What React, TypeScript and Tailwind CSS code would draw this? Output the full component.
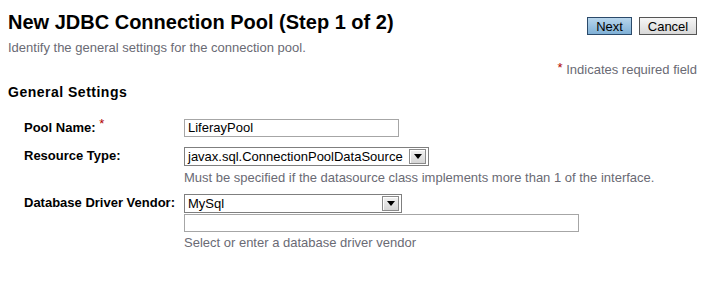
const font = { fontFamily: '"Liberation Sans", Arial, sans-serif' };

function Arrow() {
  return (
    <span className="flex h-[15px] w-[17px] items-center justify-center border border-[#8a8a8a] bg-gradient-to-b from-[#f2f2f2] to-[#d6d6d6] shadow-[inset_1px_1px_0_#fff]">
      <svg width="8" height="5" viewBox="0 0 8 5">
        <path d="M0 0h8L4 5z" fill="#000" />
      </svg>
    </span>
  );
}

function Select({ value, width }: { value: string; width: string }) {
  return (
    <div className={`flex h-[19px] items-center justify-between border border-[#7f7f7f] bg-white pl-[3px] pr-[2px] ${width}`}>
      <span className="text-[13px] leading-none text-black">{value}</span>
      <Arrow />
    </div>
  );
}

export default function App() {
  return (
    <div className="h-[290px] w-[705px] bg-white text-black" style={font}>
      <div className="flex items-start justify-between pl-2 pr-2 pt-[10px]">
        <div>
          <h1 className="text-[20px] font-bold leading-[24px]">New JDBC Connection Pool (Step 1 of 2)</h1>
          <p className="mt-[6px] text-[13px] leading-[15px] text-[#6a6a74]">Identify the general settings for the connection pool.</p>
        </div>
        <div className="mt-[7px] flex gap-[7px]">
          <button className="h-[18px] w-[45px] border border-[#2b4a6a] bg-gradient-to-b from-[#b8d6ec] to-[#7fb0d6] text-[13px] leading-none">Next</button>
          <button className="h-[18px] w-[58px] border border-[#555] bg-gradient-to-b from-[#f6f6f6] to-[#d8d8d8] text-[13px] leading-none">Cancel</button>
        </div>
      </div>
      <div className="mt-[7px] pr-[8px] text-right text-[13px] leading-[15px] text-[#6a6a74]">
        <span className="relative -top-[2px] text-[#b00000]">*</span> Indicates required field
      </div>
      <h2 className="mt-[7px] pl-2 text-[14px] font-bold leading-[16px] tracking-[0.5px]">General Settings</h2>
      <div className="mt-[19px] flex flex-col pl-6 text-[13px]">
        <div className="flex">
          <div className="w-[160px] font-bold leading-[18px]">
            Pool Name: <span className="relative -top-[4px] font-normal text-[#b00000]">*</span>
          </div>
          <div className="flex h-[18px] w-[215px] items-center border border-[#a6a6a6] bg-white pl-[3px]">LiferayPool</div>
        </div>
        <div className="mt-[10px] flex">
          <div className="w-[160px] font-bold leading-[18px]">Resource Type:</div>
          <div>
            <Select value="javax.sql.ConnectionPoolDataSource" width="w-[245px]" />
            <p className="mt-[4px] leading-[15px] text-[#6a6a74]">Must be specified if the datasource class implements more than 1 of the interface.</p>
          </div>
        </div>
        <div className="mt-[9px] flex">
          <div className="w-[160px] font-bold leading-[18px]">Database Driver Vendor:</div>
          <div>
            <Select value="MySql" width="w-[218px]" />
            <div className="mt-px h-[18px] w-[395px] border border-[#a6a6a6] bg-white" />
            <p className="mt-[3px] leading-[15px] text-[#6a6a74]">Select or enter a database driver vendor</p>
          </div>
        </div>
      </div>
    </div>
  );
}
